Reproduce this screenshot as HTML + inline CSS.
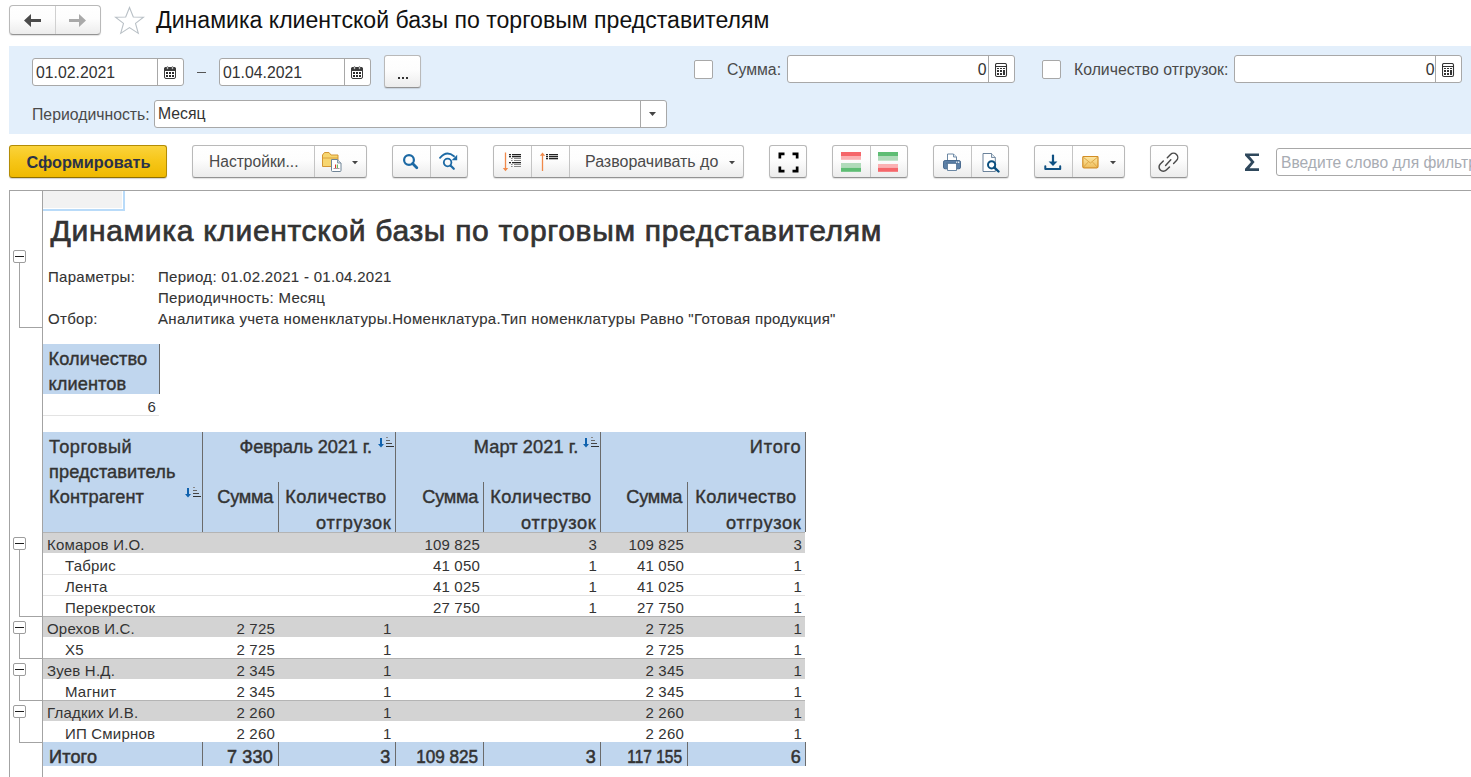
<!DOCTYPE html>
<html><head><meta charset="utf-8">
<style>
html,body{margin:0;padding:0;width:1471px;height:777px;overflow:hidden;background:#fff;}
body{position:relative;font-family:"Liberation Sans",sans-serif;color:#333;}
.a{position:absolute;}
.t{position:absolute;white-space:nowrap;line-height:1;}
.btn{position:absolute;box-sizing:border-box;border:1px solid #b9b9b9;border-bottom-color:#939393;border-radius:3px;background:linear-gradient(#ffffff 0%,#fdfdfd 45%,#ececec 100%);box-shadow:0 1px 1px rgba(0,0,0,0.12);}
.dv{position:absolute;top:0;bottom:0;width:1px;background:#c4c4c4;}
.inp{position:absolute;box-sizing:border-box;border:1px solid #a8a8a8;border-radius:3px;background:#fff;}
.cb{position:absolute;box-sizing:border-box;border:1px solid #a8a8a8;border-radius:2px;background:#fff;}
.r{font-family:"Liberation Sans",sans-serif;}
</style></head><body>

<!-- nav buttons -->
<div class="btn" style="left:9px;top:5px;width:92px;height:30px;border-radius:4px;">
  <div class="dv" style="left:45px;background:#d0d0d0"></div>
  <svg class="a" style="left:14px;top:8px" width="18" height="14" viewBox="0 0 18 14"><path d="M0 6.5 L7 0 L7 5 L17 5 L17 8 L7 8 L7 13 Z" fill="#4b4b4b"/></svg>
  <svg class="a" style="left:59px;top:8px" width="18" height="14" viewBox="0 0 18 14"><path d="M17 6.5 L10 0 L10 5 L0 5 L0 8 L10 8 L10 13 Z" fill="#a9a9a9"/></svg>
</div>
<!-- star -->
<svg class="a" style="left:114px;top:6px" width="31" height="29" viewBox="0 0 31 30" preserveAspectRatio="none"><path d="M15.5 1.5 L19.3 11.3 L29.5 11.6 L21.5 18 L24.3 28.3 L15.5 22.4 L6.7 28.3 L9.5 18 L1.5 11.6 L11.7 11.3 Z" fill="none" stroke="#b9c0c6" stroke-width="1.1"/></svg>
<div class="t" style="left:156px;top:9px;font-size:23.1px;color:#111;">Динамика клиентской базы по торговым представителям</div>

<!-- blue panel -->
<div class="a" style="left:9px;top:46px;width:1462px;height:88px;background:#e3effb;"></div>


<!-- panel contents -->
<div class="inp" style="left:32px;top:58px;width:152px;height:28px;">
  <div class="dv" style="left:124px;background:#a8a8a8"></div>
  <svg class="a" style="left:131px;top:6px" width="13" height="16" viewBox="0 0 13 16"><rect x="0.5" y="2.5" width="11" height="11" rx="1.5" fill="#fff" stroke="#3a3a3a" stroke-width="1"/><path d="M0 6 L0 4 Q0 2 2 2 L10 2 Q12 2 12 4 L12 6 Z" fill="#3a3a3a"/><ellipse cx="3.5" cy="3" rx="1" ry="1.25" fill="#fff" stroke="#3a3a3a" stroke-width="0.8"/><ellipse cx="8.5" cy="3" rx="1" ry="1.25" fill="#fff" stroke="#3a3a3a" stroke-width="0.8"/><g fill="#2a2a2a"><rect x="2" y="7" width="2" height="2"/><rect x="5" y="7" width="2" height="2"/><rect x="8" y="7" width="2" height="2"/><rect x="2" y="10" width="2" height="2"/><rect x="5" y="10" width="2" height="2"/><rect x="8" y="10" width="2" height="2"/></g></svg>
</div>
<div class="t" style="left:36px;top:65px;font-size:15.8px;color:#333;">01.02.2021</div>
<div class="a" style="left:197px;top:72px;width:9px;height:1px;background:#555;"></div>
<div class="inp" style="left:219px;top:58px;width:152px;height:28px;">
  <div class="dv" style="left:124px;background:#a8a8a8"></div>
  <svg class="a" style="left:131px;top:6px" width="13" height="16" viewBox="0 0 13 16"><rect x="0.5" y="2.5" width="11" height="11" rx="1.5" fill="#fff" stroke="#3a3a3a" stroke-width="1"/><path d="M0 6 L0 4 Q0 2 2 2 L10 2 Q12 2 12 4 L12 6 Z" fill="#3a3a3a"/><ellipse cx="3.5" cy="3" rx="1" ry="1.25" fill="#fff" stroke="#3a3a3a" stroke-width="0.8"/><ellipse cx="8.5" cy="3" rx="1" ry="1.25" fill="#fff" stroke="#3a3a3a" stroke-width="0.8"/><g fill="#2a2a2a"><rect x="2" y="7" width="2" height="2"/><rect x="5" y="7" width="2" height="2"/><rect x="8" y="7" width="2" height="2"/><rect x="2" y="10" width="2" height="2"/><rect x="5" y="10" width="2" height="2"/><rect x="8" y="10" width="2" height="2"/></g></svg>
</div>
<div class="t" style="left:223px;top:65px;font-size:15.8px;color:#333;">01.04.2021</div>
<div class="btn" style="left:384px;top:55px;width:37px;height:33px;">
  <div class="a" style="left:13px;top:21px;width:2px;height:2px;background:#333"></div>
  <div class="a" style="left:17px;top:21px;width:2px;height:2px;background:#333"></div>
  <div class="a" style="left:21px;top:21px;width:2px;height:2px;background:#333"></div>
</div>
<div class="t" style="left:32px;top:107px;font-size:15.8px;color:#4a4a4a;">Периодичность:</div>
<div class="inp" style="left:154px;top:100px;width:513px;height:28px;">
  <div class="dv" style="left:485px;background:#a8a8a8"></div>
  <svg class="a" style="left:494px;top:11px" width="8" height="5" viewBox="0 0 8 5"><path d="M0 0 L7 0 L3.5 4 Z" fill="#444"/></svg>
</div>
<div class="t" style="left:158px;top:106px;font-size:15.8px;color:#333;">Месяц</div>

<div class="cb" style="left:694px;top:60px;width:19px;height:19px;"></div>
<div class="t" style="left:727px;top:62px;font-size:15.8px;color:#4a4a4a;">Сумма:</div>
<div class="inp" style="left:787px;top:55px;width:228px;height:28px;">
  <div class="dv" style="left:200px;background:#a8a8a8"></div>
  <svg class="a" style="left:207px;top:7px" width="13" height="15" viewBox="0 0 13 15"><rect x="0.5" y="0.5" width="11" height="13" rx="1.5" fill="#fff" stroke="#333" stroke-width="1.1"/><rect x="0.5" y="3" width="11" height="1" fill="#333"/><g fill="#333"><rect x="2" y="5" width="2" height="1"/><rect x="5" y="5" width="2" height="1"/><rect x="8" y="5" width="2" height="1"/><rect x="2" y="7" width="2" height="2"/><rect x="5" y="7" width="2" height="2"/><rect x="8" y="7" width="2" height="5"/><rect x="2" y="10" width="2" height="2"/><rect x="5" y="10" width="2" height="2"/></g></svg>
</div>
<div class="t" style="left:976.5px;top:62px;font-size:15.8px;color:#333;width:10px;text-align:right;">0</div>
<div class="cb" style="left:1042px;top:60px;width:19px;height:19px;"></div>
<div class="t" style="left:1074px;top:62px;font-size:15.8px;color:#4a4a4a;">Количество отгрузок:</div>
<div class="inp" style="left:1234px;top:55px;width:228px;height:28px;">
  <div class="dv" style="left:200px;background:#a8a8a8"></div>
  <svg class="a" style="left:207px;top:7px" width="13" height="15" viewBox="0 0 13 15"><rect x="0.5" y="0.5" width="11" height="13" rx="1.5" fill="#fff" stroke="#333" stroke-width="1.1"/><rect x="0.5" y="3" width="11" height="1" fill="#333"/><g fill="#333"><rect x="2" y="5" width="2" height="1"/><rect x="5" y="5" width="2" height="1"/><rect x="8" y="5" width="2" height="1"/><rect x="2" y="7" width="2" height="2"/><rect x="5" y="7" width="2" height="2"/><rect x="8" y="7" width="2" height="5"/><rect x="2" y="10" width="2" height="2"/><rect x="5" y="10" width="2" height="2"/></g></svg>
</div>
<div class="t" style="left:1424.5px;top:62px;font-size:15.8px;color:#333;width:10px;text-align:right;">0</div>


<!-- toolbar -->
<div class="a" style="left:9px;top:145px;width:158px;height:33px;box-sizing:border-box;border:1px solid #b38c05;border-bottom-color:#8f6f00;border-radius:3px;background:linear-gradient(#fad33c 0%,#f7c71a 45%,#efb900 100%);box-shadow:0 1px 1px rgba(0,0,0,0.18);"></div>
<div class="t" style="left:26.5px;top:154px;font-size:16.3px;font-weight:bold;color:#2b3248;">Сформировать</div>

<div class="btn" style="left:192px;top:145px;width:175px;height:33px;">
  <div class="dv" style="left:121px;"></div>
  <svg class="a" style="left:128px;top:5px" width="22" height="22" viewBox="0 0 22 22">
    <path d="M1.5 15.5 L1.5 4 L3.5 1.5 L8 1.5 L10 4 L17 4 L17 15.5 Z" fill="#f7d670" stroke="#d39634" stroke-width="1"/>
    <path d="M2 7 L17 7" stroke="#d39634" stroke-width="0.8"/>
    <path d="M10.5 8.5 L16.5 8.5 L20 12 L20 19.5 Q20 20.5 19 20.5 L11.5 20.5 Q10.5 20.5 10.5 19.5 Z" fill="#fff" stroke="#6f8496" stroke-width="1"/>
    <path d="M16.5 8.5 L16.5 12 L20 12" fill="#cfd9e0" stroke="#6f8496" stroke-width="0.8"/>
    <rect x="14" y="13.5" width="1" height="3.5" fill="#e2332a"/><rect x="15.8" y="13.5" width="1" height="3.5" fill="#4aa83d"/>
    <rect x="12.5" y="17" width="6" height="0.7" fill="#8a6f7a"/>
  </svg>
  <svg class="a" style="left:159px;top:15px" width="7" height="4" viewBox="0 0 7 4"><path d="M0 0 L6 0 L3 3.2 Z" fill="#444"/></svg>
</div>
<div class="t" style="left:209px;top:153.6px;font-size:15.6px;color:#4a4a4a;">Настройки...</div>

<div class="btn" style="left:392px;top:145px;width:76px;height:33px;">
  <div class="dv" style="left:37px;"></div>
  <svg class="a" style="left:8px;top:6px" width="18" height="18" viewBox="0 0 18 18"><circle cx="8" cy="8" r="4.9" fill="none" stroke="#1c69a4" stroke-width="2.2"/><path d="M11.6 11.6 L15.8 15.8" stroke="#1c69a4" stroke-width="2.8" stroke-linecap="round"/></svg>
  <svg class="a" style="left:44px;top:5px" width="22" height="22" viewBox="0 0 22 22"><path d="M3 6.8 Q9.5 -1 17 5.2" fill="none" stroke="#1c69a4" stroke-width="1.8" stroke-linecap="round"/><path d="M14.6 9.2 L20.2 3.8 L20.2 9.2 Z" fill="#1c69a4"/><circle cx="10.6" cy="11.5" r="3.8" fill="none" stroke="#1c69a4" stroke-width="1.8"/><path d="M13.5 14.5 L16.8 17.8" stroke="#1c69a4" stroke-width="2.2" stroke-linecap="round"/></svg>
</div>

<div class="btn" style="left:493px;top:145px;width:251px;height:33px;">
  <div class="dv" style="left:37px;"></div>
  <div class="dv" style="left:75px;"></div>
  <svg class="a" style="left:6px;top:5px" width="24" height="22" viewBox="0 0 24 22">
    <path d="M5.5 1.5 L5.5 19" stroke="#f0894a" stroke-width="1.3"/><path d="M2.8 17 L8.2 17 L5.5 20.2 Z" fill="#f0894a"/>
    <g fill="#222"><rect x="9" y="3" width="2" height="1.3"/><rect x="12" y="3" width="9" height="1.3"/><rect x="9" y="5" width="2" height="1.3"/><rect x="12" y="5" width="9" height="1.3"/><rect x="9" y="11" width="2" height="1.3"/><rect x="12" y="11" width="9" height="1.3"/></g>
    <g fill="#888"><rect x="11" y="7" width="1.6" height="1"/><rect x="14" y="7" width="7" height="1"/><rect x="11" y="9" width="1.6" height="1"/><rect x="14" y="9" width="7" height="1"/><rect x="11" y="13" width="1.6" height="1"/><rect x="14" y="13" width="7" height="1"/><rect x="11" y="15" width="1.6" height="1"/><rect x="14" y="15" width="7" height="1"/></g>
  </svg>
  <svg class="a" style="left:43px;top:5px" width="24" height="22" viewBox="0 0 24 22">
    <path d="M5.5 3 L5.5 20" stroke="#f0894a" stroke-width="1.3"/><path d="M2.8 4.8 L8.2 4.8 L5.5 1.5 Z" fill="#f0894a"/>
    <g fill="#222"><rect x="9" y="3" width="2" height="1.3"/><rect x="12" y="3" width="9" height="1.3"/><rect x="9" y="5" width="2" height="1.3"/><rect x="12" y="5" width="9" height="1.3"/><rect x="9" y="7" width="2" height="1.3"/><rect x="12" y="7" width="9" height="1.3"/></g>
  </svg>
  <svg class="a" style="left:235px;top:15px" width="7" height="4" viewBox="0 0 7 4"><path d="M0 0 L6 0 L3 3.2 Z" fill="#444"/></svg>
</div>
<div class="t" style="left:585px;top:154px;font-size:16px;color:#4a4a4a;">Разворачивать до</div>

<div class="btn" style="left:769px;top:145px;width:38px;height:33px;">
  <svg class="a" style="left:8px;top:6px" width="21" height="21" viewBox="0 0 21 21"><g fill="#000"><path d="M0.5 0.5 H6.5 V3.2 H3.2 V6.5 H0.5 Z"/><path d="M20.5 0.5 H14.5 V3.2 H17.8 V6.5 H20.5 Z"/><path d="M0.5 20.5 H6.5 V17.8 H3.2 V14.5 H0.5 Z"/><path d="M20.5 20.5 H14.5 V17.8 H17.8 V14.5 H20.5 Z"/></g></svg>
</div>

<div class="btn" style="left:832px;top:145px;width:76px;height:33px;">
  <div class="dv" style="left:37px;"></div>
  <svg class="a" style="left:8px;top:6px" width="21" height="21" viewBox="0 0 21 21"><rect x="0" y="0" width="20" height="4" fill="#f5666a"/><rect x="0" y="4" width="20" height="3.8" fill="#fbb1b3"/><rect x="0" y="11" width="20" height="4.8" fill="#b0dbba"/><rect x="0" y="15.8" width="20" height="4" fill="#5ebd74"/></svg>
  <svg class="a" style="left:45px;top:6px" width="21" height="21" viewBox="0 0 21 21"><rect x="0" y="0" width="20" height="4" fill="#5ebd74"/><rect x="0" y="4" width="20" height="4.7" fill="#b0dbba"/><rect x="0" y="12" width="20" height="3.8" fill="#fbb1b3"/><rect x="0" y="15.8" width="20" height="4" fill="#f5666a"/></svg>
</div>

<div class="btn" style="left:933px;top:145px;width:76px;height:33px;">
  <div class="dv" style="left:37px;"></div>
  <svg class="a" style="left:9px;top:7px" width="20" height="20" viewBox="0 0 20 20">
    <path d="M4.5 1 L10.5 1 L13.5 4 L13.5 8 L4.5 8 Z" fill="#fff" stroke="#5b7a9a" stroke-width="0.9"/>
    <path d="M10.5 1 L10.5 4 L13.5 4" fill="#dde6ee" stroke="#5b7a9a" stroke-width="0.8"/>
    <rect x="0.5" y="7.5" width="17" height="8.3" rx="1.6" fill="#5d80a6" stroke="#3f6288" stroke-width="0.9"/>
    <rect x="13" y="8.6" width="1.3" height="1.3" fill="#fff"/><rect x="15" y="8.6" width="1.3" height="1.3" fill="#fff"/>
    <path d="M3.5 10.3 L14.5 10.3" stroke="#3f6288" stroke-width="0.9"/>
    <path d="M4.5 10.8 L4.5 17.5 L13.5 17.5 L13.5 10.8" fill="#fff" stroke="#5b7a9a" stroke-width="0.9"/>
  </svg>
  <svg class="a" style="left:48px;top:7px" width="20" height="20" viewBox="0 0.5 20 20">
    <path d="M1 1 L9.5 1 L13.3 5 L13.3 19 L1 19 Z" fill="#fff" stroke="#5b7590" stroke-width="0.9"/>
    <path d="M9.5 1 L9.5 5 L13.3 5" fill="#dde6ee" stroke="#5b7590" stroke-width="0.8"/>
    <circle cx="9.6" cy="12.3" r="3.6" fill="#fff" stroke="#0b4f7f" stroke-width="2"/>
    <path d="M12.2 14.9 L16.5 19" stroke="#0b4f7f" stroke-width="2.4" stroke-linecap="round"/>
  </svg>
</div>

<div class="btn" style="left:1034px;top:145px;width:91px;height:33px;">
  <div class="dv" style="left:37px;"></div>
  <svg class="a" style="left:8px;top:8px" width="20" height="18" viewBox="0 0 20 18">
    <path d="M10 1.6 L10 9" stroke="#0f5082" stroke-width="2.2" stroke-linecap="round"/>
    <path d="M5.6 7.4 L14.4 7.4 L10 12 Z" fill="#0f5082"/>
    <path d="M2.3 12.3 L2.3 14.9 L17.2 14.9 L17.2 12.3" fill="none" stroke="#0f5082" stroke-width="2" stroke-linejoin="round" stroke-linecap="round"/>
  </svg>
  <svg class="a" style="left:47px;top:10px" width="18" height="14" viewBox="0 0.4 18 14">
    <defs><linearGradient id="eg" x1="0" y1="0" x2="0" y2="1"><stop offset="0" stop-color="#fde7a4"/><stop offset="1" stop-color="#efbe5c"/></linearGradient></defs>
    <rect x="0.8" y="0.8" width="15.2" height="11.4" rx="1.2" fill="url(#eg)" stroke="#d28d24" stroke-width="1.2"/>
    <path d="M1.5 1.8 L8.4 7.4 L15.3 1.8 M1.5 11.5 L6.2 6.5 M15.3 11.5 L10.6 6.5" fill="none" stroke="#d8a040" stroke-width="0.9"/>
  </svg>
  <svg class="a" style="left:75px;top:15px" width="7" height="4" viewBox="0 0 7 4"><path d="M0 0 L6 0 L3 3.2 Z" fill="#444"/></svg>
</div>

<div class="btn" style="left:1150px;top:145px;width:38px;height:33px;">
  <svg class="a" style="left:4px;top:4px" width="28" height="26" viewBox="1155 150 28 26">
    <path d="M1167.3 157.7 L1170.5 154.5 A4.2 4.2 0 0 1 1176.5 160.5 L1173.6 163.4" fill="none" stroke="#4a4a4a" stroke-width="1.45" stroke-linecap="round"/>
    <path d="M1163.3 161.1 L1160.3 164.1 A4.2 4.2 0 0 0 1166.3 170.1 L1169.5 166.9" fill="none" stroke="#4a4a4a" stroke-width="1.45" stroke-linecap="round"/>
    <path d="M1165.6 165.4 L1170.8 159.8" stroke="#4a4a4a" stroke-width="1.45" stroke-linecap="round"/>
  </svg>
</div>

<svg class="a" style="left:1244px;top:152px" width="16" height="20" viewBox="0 0 16 20"><path d="M1 1.5 L15 1.5 L15 4 L5.5 4 L10.6 10 L5.5 16.3 L15 16.3 L15 19 L1 19 L1 16.8 L7 10 L1 3.4 Z" fill="#2f485c"/></svg>

<div class="inp" style="left:1276px;top:148px;width:210px;height:28px;"></div>
<div class="t" style="left:1281px;top:155px;font-size:15.6px;color:#a8acb3;">Введите слово для фильтра</div>

<!-- REPORT START -->
<!-- report frame -->
<div class="a" style="left:9px;top:190px;width:1462px;height:1px;background:#a3a3a3"></div>
<div class="a" style="left:9px;top:190px;width:1px;height:587px;background:#a3a3a3"></div>
<div class="a" style="left:42px;top:191px;width:1px;height:586px;background:#a3a3a3"></div>
<div class="a" style="left:43px;top:191px;width:79px;height:17px;background:#f2f2f2"></div>
<div class="a" style="left:123px;top:191px;width:2px;height:20px;background:#b9dbf9"></div>
<div class="a" style="left:43px;top:209px;width:82px;height:2px;background:#b9dbf9"></div>
<div class="a" style="left:13px;top:250px;width:13px;height:13px;box-sizing:border-box;border:1px solid #9d9d9d;border-radius:2px;background:#fff"><div class="a" style="left:1px;top:5px;width:9px;height:1px;background:#1e1e1e"></div></div>
<div class="a" style="left:19px;top:263px;width:1px;height:64px;background:#a3a3a3"></div>
<div class="a" style="left:19px;top:327px;width:23px;height:1px;background:#a3a3a3"></div>
<div class="t" style="left:50.5px;top:215.6px;font-size:30px;font-weight:normal;letter-spacing:0.68px;-webkit-text-stroke:0.7px #333;color:#333;">Динамика клиентской базы по торговым представителям</div>
<div class="t" style="left:48px;top:269.3px;font-size:15px;letter-spacing:0.3px;-webkit-text-stroke:0.1px #333;color:#333;">Параметры:</div>
<div class="t" style="left:158px;top:269.3px;font-size:15px;letter-spacing:0.3px;-webkit-text-stroke:0.1px #333;color:#333;">Период: 01.02.2021 - 01.04.2021</div>
<div class="t" style="left:158px;top:289.8px;font-size:15px;letter-spacing:0.3px;-webkit-text-stroke:0.1px #333;color:#333;">Периодичность: Месяц</div>
<div class="t" style="left:48px;top:310.6px;font-size:15px;letter-spacing:0.3px;-webkit-text-stroke:0.1px #333;color:#333;">Отбор:</div>
<div class="t" style="left:158px;top:310.6px;font-size:15px;letter-spacing:0.3px;-webkit-text-stroke:0.1px #333;color:#333;">Аналитика учета номенклатуры.Номенклатура.Тип номенклатуры Равно "Готовая продукция"</div>
<div class="a" style="left:43px;top:344px;width:116px;height:50px;background:#c0d6ee"></div>
<div class="a" style="left:159px;top:344px;width:1px;height:50px;background:#6b6b6b"></div>
<div class="t" style="left:48.5px;top:350.3px;font-size:18.2px;letter-spacing:0.1px;-webkit-text-stroke:0.4px #333;color:#333;">Количество</div>
<div class="t" style="left:48.5px;top:375.0px;font-size:18.2px;letter-spacing:0.1px;-webkit-text-stroke:0.4px #333;color:#333;">клиентов</div>
<div class="t" style="left:-44px;top:398.7px;width:200px;text-align:right;font-size:15px;letter-spacing:0.2px;color:#333;">6</div>
<div class="a" style="left:43px;top:415px;width:116px;height:1px;background:#e3e3e3"></div>
<div class="a" style="left:43px;top:432px;width:762px;height:100px;background:#c0d6ee"></div>
<div class="a" style="left:202px;top:432px;width:1px;height:100px;background:#6b6b6b"></div>
<div class="a" style="left:395px;top:432px;width:1px;height:100px;background:#6b6b6b"></div>
<div class="a" style="left:600px;top:432px;width:1px;height:100px;background:#6b6b6b"></div>
<div class="a" style="left:805px;top:432px;width:1px;height:100px;background:#6b6b6b"></div>
<div class="a" style="left:278px;top:482px;width:1px;height:50px;background:#6b6b6b"></div>
<div class="a" style="left:483px;top:482px;width:1px;height:50px;background:#6b6b6b"></div>
<div class="a" style="left:687px;top:482px;width:1px;height:50px;background:#6b6b6b"></div>
<div class="t" style="left:49px;top:438.3px;font-size:18.2px;letter-spacing:0.5px;-webkit-text-stroke:0.4px #333;color:#333;">Торговый</div>
<div class="t" style="left:49px;top:462.7px;font-size:18.2px;letter-spacing:0.1px;-webkit-text-stroke:0.4px #333;color:#333;">представитель</div>
<div class="t" style="left:49px;top:488.1px;font-size:18.2px;letter-spacing:0.1px;-webkit-text-stroke:0.4px #333;color:#333;">Контрагент</div>
<svg class="a" style="left:185px;top:487px" width="17" height="11" viewBox="0 0 17 11"><rect x="2" y="1" width="2" height="6.5" fill="#0f62ae"/><path d="M0 7 L6 7 L3 10.5 Z" fill="#0f62ae"/><g fill="#444"><rect x="8" y="0" width="2" height="1" fill="#888"/><rect x="8" y="3" width="4" height="1" fill="#666"/><rect x="8" y="6" width="6" height="1"/><rect x="8" y="9" width="8" height="1" fill="#333"/></g></svg>
<div class="t" style="left:172px;top:438.2px;width:200px;text-align:right;font-size:18.2px;letter-spacing:-0.1px;-webkit-text-stroke:0.4px #333;color:#333;">Февраль 2021 г.</div>
<svg class="a" style="left:378px;top:437px" width="17" height="11" viewBox="0 0 17 11"><rect x="2" y="1" width="2" height="6.5" fill="#0f62ae"/><path d="M0 7 L6 7 L3 10.5 Z" fill="#0f62ae"/><g fill="#444"><rect x="8" y="0" width="2" height="1" fill="#888"/><rect x="8" y="3" width="4" height="1" fill="#666"/><rect x="8" y="6" width="6" height="1"/><rect x="8" y="9" width="8" height="1" fill="#333"/></g></svg>
<div class="t" style="left:378.5px;top:438.2px;width:200px;text-align:right;font-size:18.2px;letter-spacing:0.1px;-webkit-text-stroke:0.4px #333;color:#333;">Март 2021 г.</div>
<svg class="a" style="left:583px;top:437px" width="17" height="11" viewBox="0 0 17 11"><rect x="2" y="1" width="2" height="6.5" fill="#0f62ae"/><path d="M0 7 L6 7 L3 10.5 Z" fill="#0f62ae"/><g fill="#444"><rect x="8" y="0" width="2" height="1" fill="#888"/><rect x="8" y="3" width="4" height="1" fill="#666"/><rect x="8" y="6" width="6" height="1"/><rect x="8" y="9" width="8" height="1" fill="#333"/></g></svg>
<div class="t" style="left:601.5px;top:438.2px;width:200px;text-align:right;font-size:18.2px;letter-spacing:0.8px;-webkit-text-stroke:0.4px #333;color:#333;">Итого</div>
<div class="t" style="left:73px;top:488.4px;width:200px;text-align:right;font-size:18.2px;letter-spacing:-0.3px;-webkit-text-stroke:0.4px #333;color:#333;">Сумма</div>
<div class="t" style="left:186.5px;top:488.4px;width:200px;text-align:right;font-size:18.2px;letter-spacing:0.35px;-webkit-text-stroke:0.4px #333;color:#333;">Количество</div>
<div class="t" style="left:191.5px;top:513.6px;width:200px;text-align:right;font-size:18.2px;letter-spacing:0.7px;-webkit-text-stroke:0.4px #333;color:#333;">отгрузок</div>
<div class="t" style="left:278px;top:488.4px;width:200px;text-align:right;font-size:18.2px;letter-spacing:-0.3px;-webkit-text-stroke:0.4px #333;color:#333;">Сумма</div>
<div class="t" style="left:391.5px;top:488.4px;width:200px;text-align:right;font-size:18.2px;letter-spacing:0.35px;-webkit-text-stroke:0.4px #333;color:#333;">Количество</div>
<div class="t" style="left:396.5px;top:513.6px;width:200px;text-align:right;font-size:18.2px;letter-spacing:0.7px;-webkit-text-stroke:0.4px #333;color:#333;">отгрузок</div>
<div class="t" style="left:482px;top:488.4px;width:200px;text-align:right;font-size:18.2px;letter-spacing:-0.3px;-webkit-text-stroke:0.4px #333;color:#333;">Сумма</div>
<div class="t" style="left:596.5px;top:488.4px;width:200px;text-align:right;font-size:18.2px;letter-spacing:0.35px;-webkit-text-stroke:0.4px #333;color:#333;">Количество</div>
<div class="t" style="left:601.5px;top:513.6px;width:200px;text-align:right;font-size:18.2px;letter-spacing:0.7px;-webkit-text-stroke:0.4px #333;color:#333;">отгрузок</div>
<div class="a" style="left:43px;top:532px;width:762px;height:21px;background:#d3d3d3"></div>
<div class="a" style="left:43px;top:532px;width:762px;height:1px;background:#b4b4b4"></div>
<div class="t" style="left:47px;top:537.1px;font-size:15px;letter-spacing:0.2px;color:#333;">Комаров И.О.</div>
<div class="t" style="left:280px;top:537.1px;width:200px;text-align:right;font-size:15px;letter-spacing:0.2px;color:#333;">109 825</div>
<div class="t" style="left:397px;top:537.1px;width:200px;text-align:right;font-size:15px;letter-spacing:0.2px;color:#333;">3</div>
<div class="t" style="left:484px;top:537.1px;width:200px;text-align:right;font-size:15px;letter-spacing:0.2px;color:#333;">109 825</div>
<div class="t" style="left:602px;top:537.1px;width:200px;text-align:right;font-size:15px;letter-spacing:0.2px;color:#333;">3</div>
<div class="a" style="left:43px;top:574px;width:762px;height:1px;background:#e3e3e3"></div>
<div class="t" style="left:65px;top:558.1px;font-size:15px;letter-spacing:0.2px;color:#333;">Табрис</div>
<div class="t" style="left:280px;top:558.1px;width:200px;text-align:right;font-size:15px;letter-spacing:0.2px;color:#333;">41 050</div>
<div class="t" style="left:397px;top:558.1px;width:200px;text-align:right;font-size:15px;letter-spacing:0.2px;color:#333;">1</div>
<div class="t" style="left:484px;top:558.1px;width:200px;text-align:right;font-size:15px;letter-spacing:0.2px;color:#333;">41 050</div>
<div class="t" style="left:602px;top:558.1px;width:200px;text-align:right;font-size:15px;letter-spacing:0.2px;color:#333;">1</div>
<div class="a" style="left:43px;top:595px;width:762px;height:1px;background:#e3e3e3"></div>
<div class="t" style="left:65px;top:579.1px;font-size:15px;letter-spacing:0.2px;color:#333;">Лента</div>
<div class="t" style="left:280px;top:579.1px;width:200px;text-align:right;font-size:15px;letter-spacing:0.2px;color:#333;">41 025</div>
<div class="t" style="left:397px;top:579.1px;width:200px;text-align:right;font-size:15px;letter-spacing:0.2px;color:#333;">1</div>
<div class="t" style="left:484px;top:579.1px;width:200px;text-align:right;font-size:15px;letter-spacing:0.2px;color:#333;">41 025</div>
<div class="t" style="left:602px;top:579.1px;width:200px;text-align:right;font-size:15px;letter-spacing:0.2px;color:#333;">1</div>
<div class="t" style="left:65px;top:600.1px;font-size:15px;letter-spacing:0.2px;color:#333;">Перекресток</div>
<div class="t" style="left:280px;top:600.1px;width:200px;text-align:right;font-size:15px;letter-spacing:0.2px;color:#333;">27 750</div>
<div class="t" style="left:397px;top:600.1px;width:200px;text-align:right;font-size:15px;letter-spacing:0.2px;color:#333;">1</div>
<div class="t" style="left:484px;top:600.1px;width:200px;text-align:right;font-size:15px;letter-spacing:0.2px;color:#333;">27 750</div>
<div class="t" style="left:602px;top:600.1px;width:200px;text-align:right;font-size:15px;letter-spacing:0.2px;color:#333;">1</div>
<div class="a" style="left:43px;top:616px;width:762px;height:21px;background:#d3d3d3"></div>
<div class="a" style="left:43px;top:616px;width:762px;height:1px;background:#b4b4b4"></div>
<div class="t" style="left:47px;top:621.1px;font-size:15px;letter-spacing:0.2px;color:#333;">Орехов И.С.</div>
<div class="t" style="left:75px;top:621.1px;width:200px;text-align:right;font-size:15px;letter-spacing:0.2px;color:#333;">2 725</div>
<div class="t" style="left:191.5px;top:621.1px;width:200px;text-align:right;font-size:15px;letter-spacing:0.2px;color:#333;">1</div>
<div class="t" style="left:484px;top:621.1px;width:200px;text-align:right;font-size:15px;letter-spacing:0.2px;color:#333;">2 725</div>
<div class="t" style="left:602px;top:621.1px;width:200px;text-align:right;font-size:15px;letter-spacing:0.2px;color:#333;">1</div>
<div class="t" style="left:65px;top:642.1px;font-size:15px;letter-spacing:0.2px;color:#333;">Х5</div>
<div class="t" style="left:75px;top:642.1px;width:200px;text-align:right;font-size:15px;letter-spacing:0.2px;color:#333;">2 725</div>
<div class="t" style="left:191.5px;top:642.1px;width:200px;text-align:right;font-size:15px;letter-spacing:0.2px;color:#333;">1</div>
<div class="t" style="left:484px;top:642.1px;width:200px;text-align:right;font-size:15px;letter-spacing:0.2px;color:#333;">2 725</div>
<div class="t" style="left:602px;top:642.1px;width:200px;text-align:right;font-size:15px;letter-spacing:0.2px;color:#333;">1</div>
<div class="a" style="left:43px;top:658px;width:762px;height:21px;background:#d3d3d3"></div>
<div class="a" style="left:43px;top:658px;width:762px;height:1px;background:#b4b4b4"></div>
<div class="t" style="left:47px;top:663.1px;font-size:15px;letter-spacing:0.2px;color:#333;">Зуев Н.Д.</div>
<div class="t" style="left:75px;top:663.1px;width:200px;text-align:right;font-size:15px;letter-spacing:0.2px;color:#333;">2 345</div>
<div class="t" style="left:191.5px;top:663.1px;width:200px;text-align:right;font-size:15px;letter-spacing:0.2px;color:#333;">1</div>
<div class="t" style="left:484px;top:663.1px;width:200px;text-align:right;font-size:15px;letter-spacing:0.2px;color:#333;">2 345</div>
<div class="t" style="left:602px;top:663.1px;width:200px;text-align:right;font-size:15px;letter-spacing:0.2px;color:#333;">1</div>
<div class="t" style="left:65px;top:684.1px;font-size:15px;letter-spacing:0.2px;color:#333;">Магнит</div>
<div class="t" style="left:75px;top:684.1px;width:200px;text-align:right;font-size:15px;letter-spacing:0.2px;color:#333;">2 345</div>
<div class="t" style="left:191.5px;top:684.1px;width:200px;text-align:right;font-size:15px;letter-spacing:0.2px;color:#333;">1</div>
<div class="t" style="left:484px;top:684.1px;width:200px;text-align:right;font-size:15px;letter-spacing:0.2px;color:#333;">2 345</div>
<div class="t" style="left:602px;top:684.1px;width:200px;text-align:right;font-size:15px;letter-spacing:0.2px;color:#333;">1</div>
<div class="a" style="left:43px;top:700px;width:762px;height:21px;background:#d3d3d3"></div>
<div class="a" style="left:43px;top:700px;width:762px;height:1px;background:#b4b4b4"></div>
<div class="t" style="left:47px;top:705.1px;font-size:15px;letter-spacing:0.2px;color:#333;">Гладких И.В.</div>
<div class="t" style="left:75px;top:705.1px;width:200px;text-align:right;font-size:15px;letter-spacing:0.2px;color:#333;">2 260</div>
<div class="t" style="left:191.5px;top:705.1px;width:200px;text-align:right;font-size:15px;letter-spacing:0.2px;color:#333;">1</div>
<div class="t" style="left:484px;top:705.1px;width:200px;text-align:right;font-size:15px;letter-spacing:0.2px;color:#333;">2 260</div>
<div class="t" style="left:602px;top:705.1px;width:200px;text-align:right;font-size:15px;letter-spacing:0.2px;color:#333;">1</div>
<div class="t" style="left:65px;top:726.1px;font-size:15px;letter-spacing:0.2px;color:#333;">ИП Смирнов</div>
<div class="t" style="left:75px;top:726.1px;width:200px;text-align:right;font-size:15px;letter-spacing:0.2px;color:#333;">2 260</div>
<div class="t" style="left:191.5px;top:726.1px;width:200px;text-align:right;font-size:15px;letter-spacing:0.2px;color:#333;">1</div>
<div class="t" style="left:484px;top:726.1px;width:200px;text-align:right;font-size:15px;letter-spacing:0.2px;color:#333;">2 260</div>
<div class="t" style="left:602px;top:726.1px;width:200px;text-align:right;font-size:15px;letter-spacing:0.2px;color:#333;">1</div>
<div class="a" style="left:13px;top:537px;width:13px;height:13px;box-sizing:border-box;border:1px solid #9d9d9d;border-radius:2px;background:#fff"><div class="a" style="left:1px;top:5px;width:9px;height:1px;background:#1e1e1e"></div></div>
<div class="a" style="left:19px;top:550px;width:1px;height:66px;background:#a3a3a3"></div>
<div class="a" style="left:19px;top:616px;width:23px;height:1px;background:#a3a3a3"></div>
<div class="a" style="left:13px;top:621px;width:13px;height:13px;box-sizing:border-box;border:1px solid #9d9d9d;border-radius:2px;background:#fff"><div class="a" style="left:1px;top:5px;width:9px;height:1px;background:#1e1e1e"></div></div>
<div class="a" style="left:19px;top:634px;width:1px;height:24px;background:#a3a3a3"></div>
<div class="a" style="left:19px;top:658px;width:23px;height:1px;background:#a3a3a3"></div>
<div class="a" style="left:13px;top:663px;width:13px;height:13px;box-sizing:border-box;border:1px solid #9d9d9d;border-radius:2px;background:#fff"><div class="a" style="left:1px;top:5px;width:9px;height:1px;background:#1e1e1e"></div></div>
<div class="a" style="left:19px;top:676px;width:1px;height:24px;background:#a3a3a3"></div>
<div class="a" style="left:19px;top:700px;width:23px;height:1px;background:#a3a3a3"></div>
<div class="a" style="left:13px;top:705px;width:13px;height:13px;box-sizing:border-box;border:1px solid #9d9d9d;border-radius:2px;background:#fff"><div class="a" style="left:1px;top:5px;width:9px;height:1px;background:#1e1e1e"></div></div>
<div class="a" style="left:19px;top:718px;width:1px;height:24px;background:#a3a3a3"></div>
<div class="a" style="left:19px;top:742px;width:23px;height:1px;background:#a3a3a3"></div>
<div class="a" style="left:43px;top:742px;width:762px;height:24px;background:#c0d6ee"></div>
<div class="a" style="left:202px;top:742px;width:1px;height:24px;background:#6b6b6b"></div>
<div class="a" style="left:278px;top:742px;width:1px;height:24px;background:#6b6b6b"></div>
<div class="a" style="left:395px;top:742px;width:1px;height:24px;background:#6b6b6b"></div>
<div class="a" style="left:483px;top:742px;width:1px;height:24px;background:#6b6b6b"></div>
<div class="a" style="left:600px;top:742px;width:1px;height:24px;background:#6b6b6b"></div>
<div class="a" style="left:687px;top:742px;width:1px;height:24px;background:#6b6b6b"></div>
<div class="a" style="left:805px;top:742px;width:1px;height:24px;background:#6b6b6b"></div>
<div class="t" style="left:49px;top:748.3px;font-size:18px;font-weight:normal;-webkit-text-stroke:0.55px #333;letter-spacing:0.2px;color:#333;">Итого</div>
<div class="t" style="left:73px;top:748.3px;width:200px;text-align:right;font-size:18px;font-weight:normal;-webkit-text-stroke:0.55px #333;letter-spacing:0.2px;color:#333;">7 330</div>
<div class="t" style="left:190.5px;top:748.3px;width:200px;text-align:right;font-size:18px;font-weight:normal;-webkit-text-stroke:0.55px #333;letter-spacing:0.2px;color:#333;">3</div>
<div class="t" style="left:278px;top:748.3px;width:200px;text-align:right;font-size:18px;font-weight:normal;-webkit-text-stroke:0.55px #333;letter-spacing:0px;transform:scaleX(0.95);transform-origin:100% 50%;color:#333;">109 825</div>
<div class="t" style="left:396px;top:748.3px;width:200px;text-align:right;font-size:18px;font-weight:normal;-webkit-text-stroke:0.55px #333;letter-spacing:0.2px;color:#333;">3</div>
<div class="t" style="left:482px;top:748.3px;width:200px;text-align:right;font-size:18px;font-weight:normal;-webkit-text-stroke:0.55px #333;letter-spacing:0px;transform:scaleX(0.86);transform-origin:100% 50%;color:#333;">117 155</div>
<div class="t" style="left:601px;top:748.3px;width:200px;text-align:right;font-size:18px;font-weight:normal;-webkit-text-stroke:0.55px #333;letter-spacing:0.2px;color:#333;">6</div>
<!-- REPORT END -->
</body></html>
